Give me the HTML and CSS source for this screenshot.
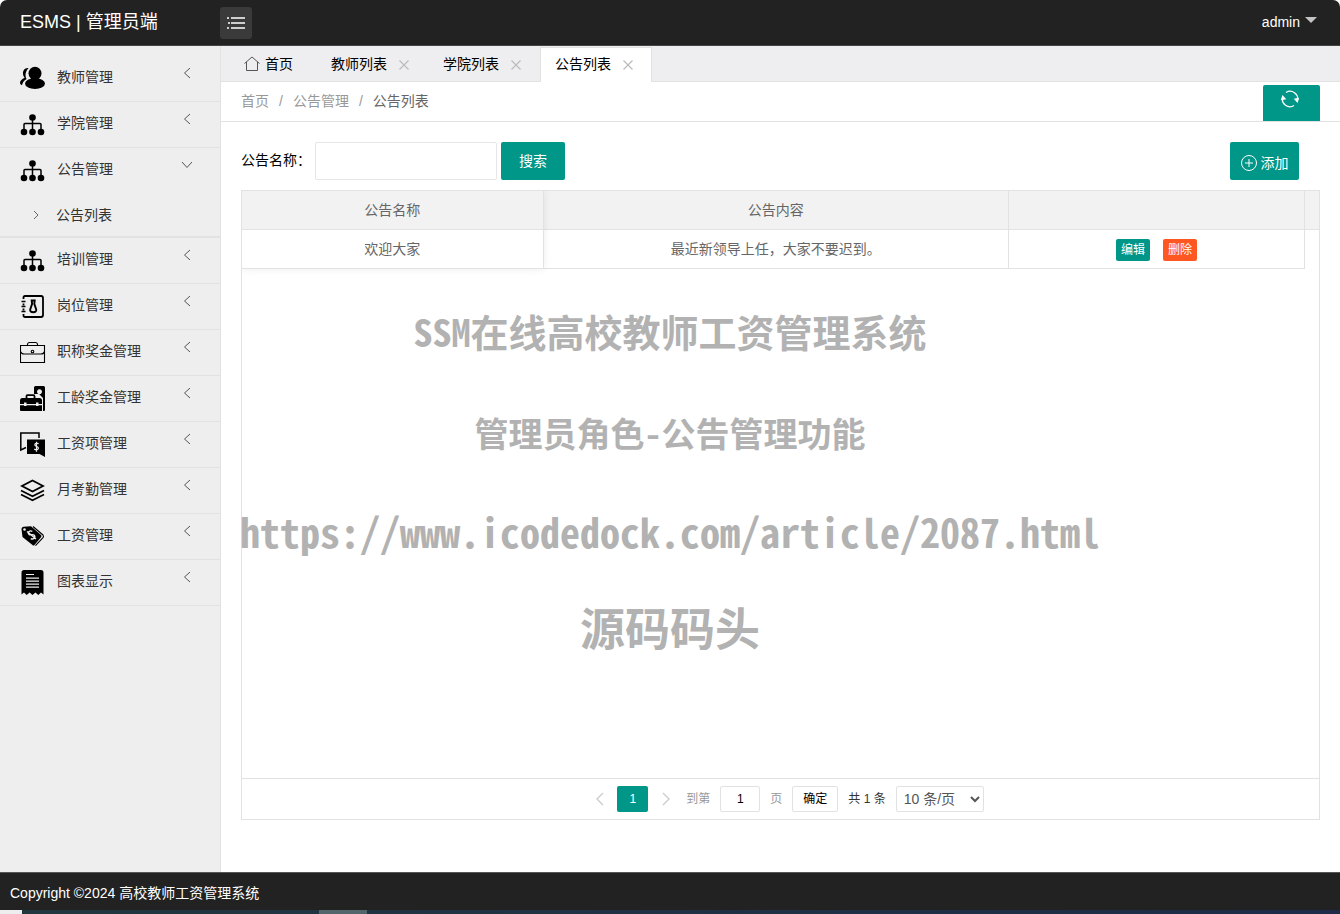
FILE: index.html
```
<!DOCTYPE html>
<html lang="zh-CN">
<head>
<meta charset="utf-8">
<meta name="viewport" content="width=device-width, initial-scale=1">
<title>ESMS | 管理员端</title>
<link rel="stylesheet" href="styles.css">
</head>
<body>
<svg class="sprite" aria-hidden="true">
  <symbol id="i-left" viewBox="0 0 12 12"><path d="M9 1 3.500 6 9 11" fill="none" stroke="currentColor"/></symbol>
  <symbol id="i-close" viewBox="0 0 12 12"><path d="M1.500 1.500l9 9M10.500 1.500l-9 9" fill="none" stroke="currentColor" stroke-width="1.200"/></symbol>
  <symbol id="i-tree" viewBox="0 0 26 26"><g fill="currentColor"><circle cx="12.500" cy="6.500" r="3.300"/><circle cx="4" cy="21" r="3.300"/><circle cx="12.500" cy="21" r="3.300"/><circle cx="21" cy="21" r="3.300"/></g><path d="M12.500 7v12M4 19v-5.500q0-1 1-1h15q1 0 1 1V19" fill="none" stroke="currentColor" stroke-width="1.500"/></symbol>
</svg>

<header class="topbar">
  <h1 class="brand">ESMS | 管理员端</h1>
  <button class="menu-toggle" type="button" aria-label="菜单">
    <svg width="18" height="14" viewBox="0 0 18 14"><path d="M4 2h14M4 7h14M4 12h14M0 2h2M1 7h2M0 12h2" stroke="currentColor" stroke-width="1.300" fill="none"/></svg>
  </button>
  <button class="user" type="button">admin <span class="caret"></span></button>
</header>

<div class="body">
  <nav class="side">
    <a class="item" href="#"><svg class="ico" viewBox="0 0 26 26"><g fill="currentColor"><path d="M8.600 3.200C5 2.600 2.600 5.600 3 9c.2 1.600.8 2.800 1.700 3.800C2 14 0 15.700 0 17.800c0 1.200.8 2 2 2.500.4-2.600 2-4.700 4.600-6.300C4.600 10.600 5.600 5.800 8.600 3.200z"/><circle cx="15" cy="8.300" r="6.500"/><ellipse cx="15" cy="18.500" rx="10" ry="5.400"/><path d="M11 13h8v3h-8z"/></g></svg><span>教师管理</span><svg class="arrow"><use href="#i-left"/></svg></a>
    <a class="item" href="#"><svg class="ico"><use href="#i-tree"/></svg><span>学院管理</span><svg class="arrow"><use href="#i-left"/></svg></a>
    <div class="group">
      <a class="item" href="#"><svg class="ico"><use href="#i-tree"/></svg><span>公告管理</span><svg class="arrow" viewBox="0 0 12 12"><path d="M1 3 6 8.500 11 3" fill="none" stroke="currentColor"/></svg></a>
      <a class="sub" href="#"><svg width="8" height="10" viewBox="0 0 8 10"><path d="M2 1l4 4-4 4" fill="none" stroke="currentColor"/></svg><span>公告列表</span></a>
    </div>
    <a class="item" href="#"><svg class="ico"><use href="#i-tree"/></svg><span>培训管理</span><svg class="arrow"><use href="#i-left"/></svg></a>
    <a class="item" href="#"><svg class="ico" viewBox="0 0 26 26" fill="none" stroke="currentColor" stroke-width="1.800"><path d="M3.500 6V4.500Q3.500 3 5 3h16q2 0 2 2v17q0 2-2 2H5q-1.500 0-1.500-1.500V21M3.500 10.500v2M3.500 15.500v2"/><path d="M1.500 8.500h4M1.500 13.500h4M1.500 18.500h4" stroke-width="1.500"/><path d="M11.700 7.500h3l-.4 3.300 1.900 5.700q.4 2.700-3 2.700t-3-2.700l1.900-5.700z" stroke-width="1.900"/></svg><span>岗位管理</span><svg class="arrow"><use href="#i-left"/></svg></a>
    <a class="item" href="#"><svg class="ico" viewBox="0 0 26 26" fill="none" stroke="currentColor" stroke-width="1.100"><path d="M.5 6.500h24v17H.5zM7.500 6.300V5.200q.4-1.700 2-1.700h6q1.600 0 2 1.700v1.100M.5 12.500q.8 2.500 3.500 2.500h17q2.700 0 3.500-2.500"/><circle cx="12.500" cy="12.500" r="1.300"/></svg><span>职称奖金管理</span><svg class="arrow"><use href="#i-left"/></svg></a>
    <a class="item" href="#"><svg class="ico" viewBox="0 0 26 26"><path fill="currentColor" fill-rule="evenodd" d="M14 9V2.500Q14 1 15.500 1h8Q25 1 25 2.500V25q0 1-1 1h-1V13l-4-4zM19.500 4.300a2.500 2.500 0 1 0 .01 0z"/><path d="M6.500 13.500v-2.300q0-1 1-1h6q1 0 1 1v2.300" fill="none" stroke="currentColor" stroke-width="1.800"/><path fill="currentColor" d="M2 13h17.500q2.500 0 2.500 2.500V19h-3.500v-1.500H16V19H6.500v-1.500H4V19H0v-3.500Q0 13 2 13zM0 20.200h4V21h2.500v-.8H16v.8h2.500v-.8H22V26H1q-1 0-1-1z"/></svg><span>工龄奖金管理</span><svg class="arrow"><use href="#i-left"/></svg></a>
    <a class="item" href="#"><svg class="ico" viewBox="0 0 26 26"><path d="M19 7V2H.8v17L6 16.500" fill="none" stroke="currentColor" stroke-width="1.500"/><path fill="currentColor" d="M7 8.500h18V26l-5.500-3H7z"/><path d="M18.600 12.800q-1.800-1.100-3-.3c-1.300 1-.8 2.300.7 2.800 2 .6 2.700 1.900 1.500 3-1.100.9-2.600.6-3.500-.3M16.500 10.800v10" fill="none" stroke="#eee" stroke-width="1.200"/></svg><span>工资项管理</span><svg class="arrow"><use href="#i-left"/></svg></a>
    <a class="item" href="#"><svg class="ico" viewBox="0 0 26 26" fill="none" stroke="currentColor" stroke-width="1.800"><path d="M12.500 3.500 23 9l-10.500 5.500L2 9zM1 13.500l11.500 5.800L24 13.500M1 17.500l11.500 5.800L24 17.500"/></svg><span>月考勤管理</span><svg class="arrow"><use href="#i-left"/></svg></a>
    <a class="item" href="#"><svg class="ico" viewBox="0 0 26 26"><path fill="currentColor" d="M1.500 6q0-2 2-2.300l7.500-.4 10 8.700q1 1 0 2.300L14.500 22q-1 1-2 0L2.500 14z"/><path d="m13 3.500 10 8.500q1 1.300 0 2.600l-7.500 8" fill="none" stroke="currentColor" stroke-width="1.100"/><circle cx="4.500" cy="6.500" r="1.300" fill="#eee"/><path d="M12.300 8.500c-2.300-1.700-5 .6-3.400 2.700 1.700 1.800 3.500-.6 5.300 1 2 2-.9 4.900-3.400 3.400M7 8.500l9 7.500" fill="none" stroke="#eee" stroke-width="1.400"/></svg><span>工资管理</span><svg class="arrow"><use href="#i-left"/></svg></a>
    <a class="item" href="#"><svg class="ico" viewBox="0 0 26 26"><path fill="currentColor" d="M1.500 25.500v-22Q1.500 1 4 1h17q2.500 0 2.500 2.500v22l-2.500-2-2.700 2.500-2.900-2.500-2.900 2.500-2.900-2.500L6.700 26 4 23.500z"/><path d="M6 5.500h8M6 9.200h13M6 12.200h13M6 15.200h13M6 18.200h13" stroke="#eee" stroke-width="1.200"/></svg><span>图表显示</span><svg class="arrow"><use href="#i-left"/></svg></a>
  </nav>

  <main class="content">
    <div class="tabs">
      <a class="tab home" href="#"><svg width="16" height="16" viewBox="0 0 16 16"><path d="M.5 7.500 8 1l7.500 6.500M2.500 6v8.500h11V6" fill="none" stroke="#555"/></svg>首页</a>
      <a class="tab" href="#">教师列表<svg class="x"><use href="#i-close"/></svg></a>
      <a class="tab" href="#">学院列表<svg class="x"><use href="#i-close"/></svg></a>
      <a class="tab active" href="#">公告列表<svg class="x"><use href="#i-close"/></svg></a>
    </div>
    <div class="crumbs">
      <a href="#">首页</a><span>/</span><a href="#">公告管理</a><span>/</span><a class="here" href="#">公告列表</a>
      <button class="btn refresh" type="button" aria-label="刷新"><svg width="18" height="18" viewBox="0 0 18 18" fill="none" stroke="currentColor" stroke-width="1.200"><path d="M5 2.500A7.600 7.600 0 0 1 16.400 10.800M13 15.500A7.600 7.600 0 0 1 1.600 7.200"/><path fill="currentColor" d="m13.900 9.200 2.400 2.600 1-3.200zM.700 9.400l1-3.200 2.400 2.600z"/></svg></button>
    </div>

    <div class="panel">
      <form class="search">
        <label for="title">公告名称：</label>
        <input id="title" type="text">
        <button class="btn find" type="button">搜索</button>
        <button class="btn add" type="button"><svg width="16" height="16" viewBox="0 0 16 16" fill="none" stroke="currentColor"><circle cx="8" cy="8" r="7.500"/><path d="M8 4v8M4 8h8"/></svg>添加</button>
      </form>

      <section class="grid-view">
        <div class="grid-body">
          <table class="grid">
            <colgroup><col class="c-name"><col class="c-text"><col><col class="c-patch"></colgroup>
            <thead><tr><th>公告名称</th><th>公告内容</th><th></th><th></th></tr></thead>
            <tbody><tr><td>欢迎大家</td><td>最近新领导上任，大家不要迟到。</td><td><span class="ops"><button class="btn xs" type="button">编辑</button><button class="btn xs danger" type="button">删除</button></span></td><td></td></tr></tbody>
          </table>
          <div class="fixed-shadow"></div>
        </div>
        <div class="pager">
          <button class="step" type="button" aria-label="上一页"><svg width="12" height="14" viewBox="0 0 12 14"><path d="M9 1 3 7l6 6" fill="none" stroke="currentColor" stroke-width="1.400"/></svg></button>
          <button class="page" type="button">1</button>
          <button class="step" type="button" aria-label="下一页"><svg width="12" height="14" viewBox="0 0 12 14"><path d="m3 1 6 6-6 6" fill="none" stroke="currentColor" stroke-width="1.400"/></svg></button>
          <label class="skip" for="page">到第</label>
          <input id="page" type="text" value="1">
          <span class="skip">页</span>
          <button class="go" type="button">确定</button>
          <span class="total">共 1 条</span>
          <select aria-label="每页条数"><option>10 条/页</option></select>
        </div>
      </section>
    </div>
  </main>
</div>

<footer class="foot">Copyright ©2024 高校教师工资管理系统</footer>
<div class="strip"><span class="strip-start"></span><span class="strip-mark"></span></div>

<div class="watermark">
  <p class="w1">SSM在线高校教师工资管理系统</p>
  <p class="w2">管理员角色-公告管理功能</p>
  <p class="w3">https://www.icodedock.com/article/2087.html</p>
  <p class="w4">源码码头</p>
</div>
</body>
</html>
```
FILE: styles.css
```
* { box-sizing: border-box; }
body {
  margin: 0;
  min-height: 100vh;
  display: flex;
  flex-direction: column;
  position: relative;
  background: #fff;
  color: #000;
  font: 14px/24px "Liberation Sans", "Noto Sans CJK SC", sans-serif;
}
a { color: inherit; text-decoration: none; }
button, input, select { font: inherit; margin: 0; }
button { border: 0; padding: 0; cursor: pointer; }
svg { flex: none; display: block; }
.sprite { position: absolute; width: 0; height: 0; }

.topbar {
  display: flex;
  align-items: center;
  height: 46px;
  background: #222;
  border-bottom: 1px solid #444;
  border-radius: 7px 7px 0 0;
  color: #fff;
}
.brand { margin: 0; width: 220px; padding: 0 0 2px 20px; font-size: 18px; font-weight: 400; }
.menu-toggle {
  display: flex;
  align-items: center;
  justify-content: center;
  width: 32px;
  height: 32px;
  border-radius: 3px;
  background: #3a3a3a;
  color: #fff;
}
.user { display: flex; align-items: center; gap: 5px; margin-left: auto; margin-right: 23px; padding-bottom: 2px; background: none; color: #fff; }
.caret { border: 6px solid transparent; border-top-color: #c4c4c4; border-bottom: 0; margin-bottom: 3px; }

.body { flex: 1; display: flex; }
.side { flex: none; width: 221px; padding-top: 10px; background: #eee; border-right: 1px solid #e2e2e2; color: #333; }
.item { display: flex; align-items: center; height: 46px; padding-left: 20px; border-bottom: 1px solid #e2e2e2; }
.item span { margin-left: 11px; line-height: 42px; align-self: flex-start; }
.ico { width: 26px; height: 26px; margin-bottom: 2px; color: #000; }
.arrow { width: 12px; height: 12px; margin: 11px 27px 0 auto; align-self: flex-start; color: #555; }
.group { border-bottom: 2px solid #e2e2e2; }
.group .item { height: 45px; border: 0; }
.sub { display: flex; align-items: center; height: 43px; padding-left: 32px; color: #333; }
.sub svg { color: #666; }
.sub span { margin-left: 16px; }

.content { flex: 1; min-width: 0; display: flex; flex-direction: column; }
.tabs { display: flex; align-items: flex-end; height: 36px; padding-left: 8px; background: #eeeef0; border-bottom: 1px solid #e2e2e2; }
.tab { display: flex; align-items: center; height: 35px; padding: 0 17px 1px 14px; border: 1px solid transparent; border-bottom: 0; }
.tab.active { background: #fff; border-color: #e2e2e2; margin-bottom: -1px; padding-bottom: 3px; }
.home { gap: 5px; padding-right: 22px; }
.x { width: 12px; height: 12px; margin: 2px 0 0 11px; color: #bbb; }

.crumbs { display: flex; align-items: center; gap: 10px; height: 40px; padding: 0 20px; border-bottom: 1px solid #e2e2e2; color: #999; line-height: 20px; }
.crumbs a, .crumbs span { padding-bottom: 2px; }
.crumbs .here { color: #666; }
.btn { border-radius: 2px; background: #009688; color: #fff; }
.refresh { display: flex; justify-content: center; align-self: flex-end; width: 57px; height: 36px; padding: 5px 4px 0 0; margin-left: auto; border-radius: 2px 2px 0 0; }

.panel { flex: 1; display: flex; flex-direction: column; padding: 20px 20px 52px; }
.search { display: flex; align-items: center; height: 38px; margin-bottom: 10px; padding-right: 21px; }
.search label { width: 74px; padding-bottom: 2px; white-space: nowrap; }
.search input { width: 182px; height: 38px; margin-right: 4px; padding: 0 10px; border: 1px solid #e6e6e6; border-radius: 2px; }
.find { width: 64px; height: 38px; }
.add { display: flex; align-items: center; justify-content: center; gap: 4px; width: 69px; height: 38px; padding-top: 3px; margin-left: auto; }

.grid-view { flex: 1; display: flex; flex-direction: column; border: 1px solid #e2e2e2; color: #666; }
.grid-body { flex: 1; position: relative; }
.grid { width: 100%; table-layout: fixed; border-collapse: separate; border-spacing: 0; }
.c-name { width: 28%; }
.c-text { width: 43.2%; }
.c-patch { width: 14px; }
.grid th, .grid td { height: 39px; padding: 0; text-align: center; font-weight: 400; border-right: 1px solid #e2e2e2; border-bottom: 1px solid #e2e2e2; }
.grid th { background: #f2f2f2; }
.grid th:last-child { border-right: 0; }
.grid td:last-child { border: 0; }
.fixed-shadow { position: absolute; left: 0; top: 0; width: 28%; height: 78px; box-shadow: 0 0 8px rgba(0, 0, 0, .08); clip-path: inset(0 -10px -10px 0); pointer-events: none; }
.ops { display: flex; justify-content: center; gap: 13px; padding-top: 1px; }
.xs { width: 34px; height: 22px; font-size: 12px; line-height: 22px; }
.danger { background: #ff5722; }

.pager { display: flex; align-items: center; justify-content: center; height: 41px; padding-left: 5px; border-top: 1px solid #e2e2e2; font-size: 12px; color: #333; }
.step { display: flex; justify-content: center; width: 35px; background: none; color: #ccc; }
.page { width: 31px; height: 26px; border-radius: 2px; background: #009688; color: #fff; }
.step + .skip { margin-left: 3px; }
.skip { color: #999; }
.pager input { width: 40px; height: 26px; margin: 0 10px; padding: 0; text-align: center; border: 1px solid #e2e2e2; border-radius: 2px; }
.go { width: 46px; height: 26px; margin: 0 10px; border: 1px solid #e2e2e2; border-radius: 2px; background: #fff; color: #000; }
.pager select { width: 88px; height: 26px; margin-left: 10px; padding: 0 3px; border: 1px solid #e2e2e2; border-radius: 2px; background: #fff; color: #555; font-size: 14px; line-height: 24px; }

.foot { height: 38px; padding-left: 10px; line-height: 40px; background: #222; border-top: 1px solid #555; color: #fff; }
.strip { display: flex; height: 4px; background: linear-gradient(90deg, #22373f, #1d2a48); }
.strip-start { width: 22px; background: #eee; }
.strip-mark { width: 48px; margin-left: 297px; background: #54646b; }

.watermark {
  position: absolute;
  inset: 307px 0 auto;
  color: #b2b2b2;
  font-family: "Noto Sans Mono CJK SC", "Noto Sans CJK SC", sans-serif;
  font-weight: 700;
  line-height: 48px;
  text-align: center;
  pointer-events: none;
}
.watermark p { margin: 0; }
.watermark .w1 { font-size: 38px; }
.watermark .w2 { font-size: 34px; margin-top: 54px; }
.watermark .w3 { font-size: 40px; margin-top: 50px; }
.watermark .w4 { font-size: 45px; margin-top: 48px; }
```
